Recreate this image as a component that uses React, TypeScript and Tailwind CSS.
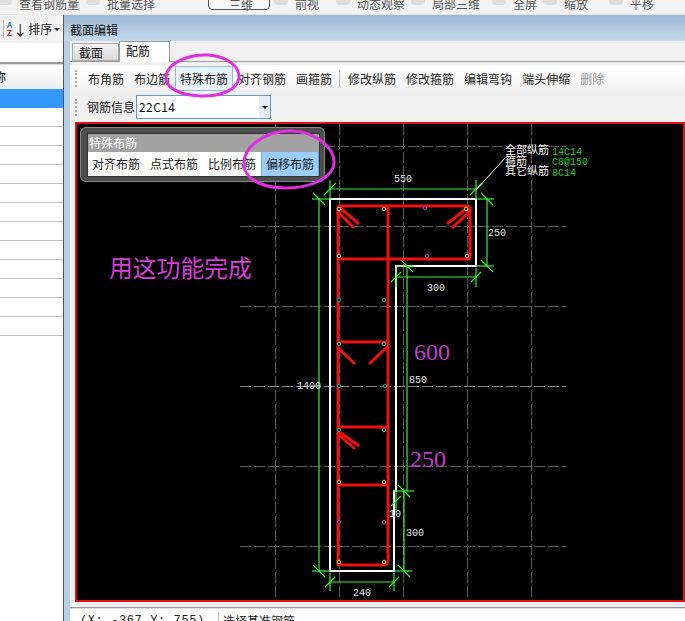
import { FC } from "react";

const font = { fontFamily: '"Noto Sans CJK SC", "Liberation Sans", sans-serif' };

const mainTools = ["布角筋", "布边筋", "特殊布筋", "对齐钢筋", "画箍筋"];
const editTools = ["修改纵筋", "修改箍筋", "编辑弯钩", "端头伸缩"];

const gridX = [275, 339, 403, 467, 531];
const gridY = [146, 226, 306, 386, 466, 546];

// everything below is in page coordinates
const rebarLines = [
  "M338 566 V208 Q338 206 340 206 H466 Q470 206 470 210 V256 Q470 259 467 259 H338",
  "M388 206 V560 Q388 565 383 565 H343 Q338 565 338 560",
  "M338 342 H388",
  "M338 427 H388",
  "M338 485 H388",
  "M339 207 L359 224",
  "M337 211 L354 228",
  "M467 208 L447 224",
  "M470 211 L452 228",
  "M337 347 L355 364",
  "M387 347 L369 364",
  "M338 431 L359 446",
  "M337 433 L355 449",
];

const dimLines = [
  "M330 189 H476",
  "M330 180 V199",
  "M476 180 V199",
  "M324 195 L336 183",
  "M470 195 L482 183",
  "M476 199 H494",
  "M476 266 H494",
  "M487 199 V266",
  "M481 193 L493 205",
  "M481 260 L493 272",
  "M396 277 H476",
  "M396 268 V287",
  "M476 268 V287",
  "M391 282 L401 272",
  "M471 282 L481 272",
  "M396 266 H414",
  "M407 266 V491",
  "M401 260 L413 272",
  "M404 491 V571",
  "M394 491 H414",
  "M398 485 L410 497",
  "M394 571 H412",
  "M398 565 L410 577",
  "M319 199 V571",
  "M312 199 H330",
  "M312 571 H330",
  "M313 193 L325 205",
  "M313 565 L325 577",
  "M330 582 H394",
  "M330 573 V591",
  "M394 573 V591",
  "M325 587 L335 577",
  "M389 587 L399 577",
  "M396 491 V512",
  "M391 506 L401 496",
];

const dots: [number, number, string][] = [
  [339, 209, "#e8d23c"],
  [384, 209, "#e8d23c"],
  [466, 209, "#e8d23c"],
  [339, 256, "#e8d23c"],
  [467, 256, "#e8d23c"],
  [425, 208, "#c030c0"],
  [427, 256, "#c030c0"],
  [339, 300, "#20b0a0"],
  [384, 300, "#20b0a0"],
  [339, 344, "#20b0a0"],
  [384, 344, "#20b0a0"],
  [339, 386, "#20b0a0"],
  [385, 386, "#20b0a0"],
  [339, 430, "#20b0a0"],
  [384, 430, "#20b0a0"],
  [339, 482, "#e8d23c"],
  [384, 482, "#e8d23c"],
  [339, 522, "#c030c0"],
  [384, 522, "#c030c0"],
  [339, 562, "#e8d23c"],
  [384, 562, "#e8d23c"],
];

const dimLabels: [number, number, string][] = [
  [403, 182, "550"],
  [497, 236, "250"],
  [436, 291, "300"],
  [309, 389, "1400"],
  [418, 383, "850"],
  [395, 517, "10"],
  [415, 536, "300"],
  [362, 596, "240"],
];

const Drawing: FC = () => (
  <svg
    className="absolute top-0 left-0"
    width={685}
    height={621}
    viewBox="0 0 685 621"
    fill="none"
    style={font}
  >
    <g shapeRendering="crispEdges">
      {gridX.map((x) => (
        <path key={x} d={`M${x} 124 V600`} stroke="#5c5c5c" strokeDasharray="11 3" />
      ))}
      {gridY.map((y) => (
        <path
          key={y}
          d={`M240 ${y} H566`}
          stroke={y === 386 ? "#8a8a8a" : "#5c5c5c"}
          strokeDasharray="11 3"
        />
      ))}
      <path
        d="M330 199 H476 V266 H396 V491 H394 V571 H330 Z"
        stroke="#ffffff"
        strokeWidth={2.5}
      />
    </g>
    {dimLines.map((d) => (
      <path key={d} d={d} stroke="#3cf03c" strokeWidth={1.2} />
    ))}
    <path d="M476 190 L505 158" stroke="#ffffff" />
    {rebarLines.map((d) => (
      <path key={d} d={d} stroke="#ee1111" strokeWidth={3} />
    ))}
    {dots.map(([x, y, c]) => (
      <circle key={`${x}-${y}`} cx={x} cy={y} r={1.8} stroke={c} strokeWidth={1} fill="#111" />
    ))}
    {dimLabels.map(([x, y, t]) => (
      <text
        key={`${x}-${y}`}
        x={x}
        y={y}
        textAnchor="middle"
        fontSize={10}
        fill="#e8e8e8"
        fontFamily="Liberation Mono, monospace"
      >
        {t}
      </text>
    ))}
    <g fontSize={11} fill="#f0f0f0">
      <text x={505} y={154}>全部纵筋</text>
      <text x={505} y={165}>箍筋</text>
      <text x={505} y={175}>其它纵筋</text>
    </g>
    <g fontSize={10} fill="#22cc22" fontFamily="Liberation Mono, monospace">
      <text x={552} y={155}>14C14</text>
      <text x={552} y={165}>C8@150</text>
      <text x={552} y={176}>8C14</text>
    </g>
    <text x={109} y={277} fontSize={23.8} fill="#d63fd6">用这功能完成</text>
    <g fontSize={24} fill="#c23ec9" fontFamily="Liberation Serif, serif">
      <text x={414} y={360}>600</text>
      <text x={410} y={467}>250</text>
    </g>
  </svg>
);

const Annotations: FC = () => (
  <svg
    className="absolute top-0 left-0 pointer-events-none"
    width={685}
    height={621}
    viewBox="0 0 685 621"
    fill="none"
  >
    <path
      d="M166 76 C168 62 190 54 208 55 C226 56 240 66 239 78 C237 90 220 97 200 96 C180 95 164 88 166 76 Z"
      stroke="#e02fe0"
      strokeWidth={3}
    />
    <path
      d="M245 170 C239 150 262 131 290 131 C316 131 334 148 334 162 C334 178 310 188 286 188 C266 188 250 182 245 170 Z"
      stroke="#e02fe0"
      strokeWidth={3}
    />
  </svg>
);

// faded toolbar icon, only its lower edge shows
const TopIcon: FC = () => (
  <span className="inline-block align-top w-[14px] h-[9px] bg-[#dcdcdc] rounded-b-sm -ml-[21px] mr-[7px]" />
);

const App: FC = () => {
  return (
    <div className="relative w-[685px] h-[621px] overflow-hidden bg-white flex flex-col" style={font}>
      {/* cut off main toolbar */}
      <div className="h-[15px] shrink-0 overflow-hidden bg-[#f3f3f3] border-b border-[#e4e4e4] text-[#555] text-[12px] leading-[15px]">
        <div className="flex items-start -mt-[4px] h-[19px]">
          <span className="ml-[19px] w-[88px] shrink-0"><TopIcon />查看钢筋量</span>
          <span className="w-[101px] shrink-0"><TopIcon />批量选择</span>
          <span className="w-[62px] h-[14px] shrink-0 border border-[#555] rounded-sm bg-[#f8f8f8] pl-[20px]">三维</span>
          <span className="ml-[25px] w-[62px] shrink-0"><TopIcon />前视</span>
          <span className="w-[75px] shrink-0"><TopIcon />动态观察</span>
          <span className="w-[81px] shrink-0"><TopIcon />局部三维</span>
          <span className="w-[51px] shrink-0"><TopIcon />全屏</span>
          <span className="w-[66px] shrink-0"><TopIcon />缩放</span>
          <span className="shrink-0"><TopIcon />平移</span>
        </div>
      </div>

      <div className="flex flex-1 min-h-0">
        {/* left list */}
        <div className="w-[63px] shrink-0 flex flex-col border-r border-[#555] box-content">
          <div className="h-[28px] bg-[#f2f2f2] flex items-center pl-[3px] gap-[1px] text-[12px] text-[#222]">
            <span className="w-px h-[18px] bg-[#bbb] mr-[2px]" />
            <span className="flex flex-col text-[8px] leading-[8px] font-bold text-[#3a6ea5]">
              <span>A</span>
              <span className="text-[#b03030]">Z</span>
            </span>
            <span className="text-[14px] leading-none">↓</span>
            <span>排序</span>
            <span className="border-x-[3px] border-x-transparent border-t-[3px] border-t-[#222] ml-[1px]" />
          </div>
          <div className="h-[21px] border-b-2 border-[#999] bg-white" />
          <div className="h-[25px] flex items-center text-[12px] bg-gradient-to-b from-white to-[#eeeeee] border-t border-[#ddd] overflow-hidden">
            <span className="shrink-0 -ml-[6px]">称</span>
          </div>
          <div className="h-[19px] bg-[#3399ff]" />
          <div className="flex flex-col">
            {Array.from({ length: 12 }).map((_, i) => (
              <div key={i} className="h-[19px] border-b border-[#c0c0c0]" />
            ))}
          </div>
        </div>

        {/* section editor */}
        <div className="flex-1 min-w-0 flex flex-col bg-[#b9cfe6] pl-[6px]">
          <div className="h-[26px] shrink-0 -ml-[6px] pl-[6px] flex items-center bg-gradient-to-b from-[#9bb8d3] to-[#c6d9eb] text-[12px] text-[#111]">
            <span className="pt-[3px]">截面编辑</span>
          </div>
          <div className="flex-1 flex flex-col bg-[#f0f0f0]">
            <div className="h-[21px] flex items-end pl-[2px] text-[12px] text-[#111] bg-[#f0f0f0] border-b border-[#9a9a9a]">
              <span className="w-[47px] h-[18px] border border-[#aaa] bg-gradient-to-b from-[#f4f4f4] to-[#d8d8d8] pl-[6px] leading-[17px]">截面</span>
              <span className="w-[51px] h-[21px] border border-[#9a9a9a] border-b-0 bg-white -mb-px pl-[6px] leading-[17px]">配筋</span>
            </div>
            <div className="h-[27px] mt-[3px] flex items-center pl-[5px] text-[12px] text-[#222] bg-gradient-to-b from-white to-[#f0f0f0]">
              <span className="w-[3px] h-[17px] border-l-2 border-dotted border-[#aaa] mr-[5px]" />
              {mainTools.map((t) => (
                <span
                  key={t}
                  className={
                    t === "特殊布筋"
                      ? "h-[25px] px-[4px] leading-[23px] bg-[#e8f2fb] border border-[#8fbbe3]"
                      : "px-[5px] leading-[22px]"
                  }
                >
                  {t}
                </span>
              ))}
              <span className="w-px h-[17px] bg-[#bbb] ml-[2px] mr-[3px]" />
              {editTools.map((t) => (
                <span key={t} className="px-[5px] leading-[22px]">{t}</span>
              ))}
              <span className="px-[5px] text-[#999]">删除</span>
            </div>
            <div className="h-[30px] flex items-center pl-[5px] text-[12px] text-[#222]">
              <span className="w-[3px] h-[17px] border-l-2 border-dotted border-[#aaa] mr-[9px]" />
              <span>钢筋信息</span>
              <div className="ml-[1px] w-[135px] h-[24px] flex items-center justify-between bg-white border border-[#5b9bd5] pl-[2px] text-[#111]">
                <span className="text-[12px] tracking-[0.4px]">22C14</span>
                <span className="w-[11px] h-full bg-[#e4eef8] flex items-center justify-center">
                  <span className="border-x-[3px] border-x-transparent border-t-[3px] border-t-black" />
                </span>
              </div>
            </div>
            {/* canvas */}
            <div className="h-[480px] ml-[5px] bg-black border-2 border-[#e01010]" />
            <div className="h-[6px] border-b border-[#999]" />
            <div className="flex-1 flex text-[12px] text-[#222] bg-white pt-[3px] border-t border-[#ddd]">
              <span className="w-[149px] border-r border-[#bbb] pl-[10px] leading-[18px] tracking-[0.6px]" style={{ fontFamily: '"Liberation Mono", monospace' }}>(X: -367 Y: 755)</span>
              <span className="pl-[4px] leading-[18px]">选择基准钢筋</span>
            </div>
          </div>
        </div>
      </div>

      <Drawing />

      {/* floating popup */}
      <div className="absolute left-[80px] top-[127px] w-[245px] pl-[6px] pr-[4px] pt-[5px] pb-[4px] rounded-[6px] bg-[#555]/90 border border-[#888]">
        <div className="bg-white border border-[#333]">
          <div className="h-[18px] bg-[#a2a2a2] text-white text-[12px] leading-[18px] pl-[1px]">特殊布筋</div>
          <div className="h-[24px] flex items-center text-[12px] text-[#222] pl-[4px]">
            <span className="w-[58px] shrink-0">对齐布筋</span>
            <span className="w-[58px] shrink-0">点式布筋</span>
            <span className="w-[53px] shrink-0">比例布筋</span>
            <span className="w-[58px] shrink-0 h-full leading-[24px] text-center bg-[#99ccff] border-x border-[#6fa8dc]">偏移布筋</span>
          </div>
        </div>
      </div>

      <Annotations />
    </div>
  );
};

export default App;
